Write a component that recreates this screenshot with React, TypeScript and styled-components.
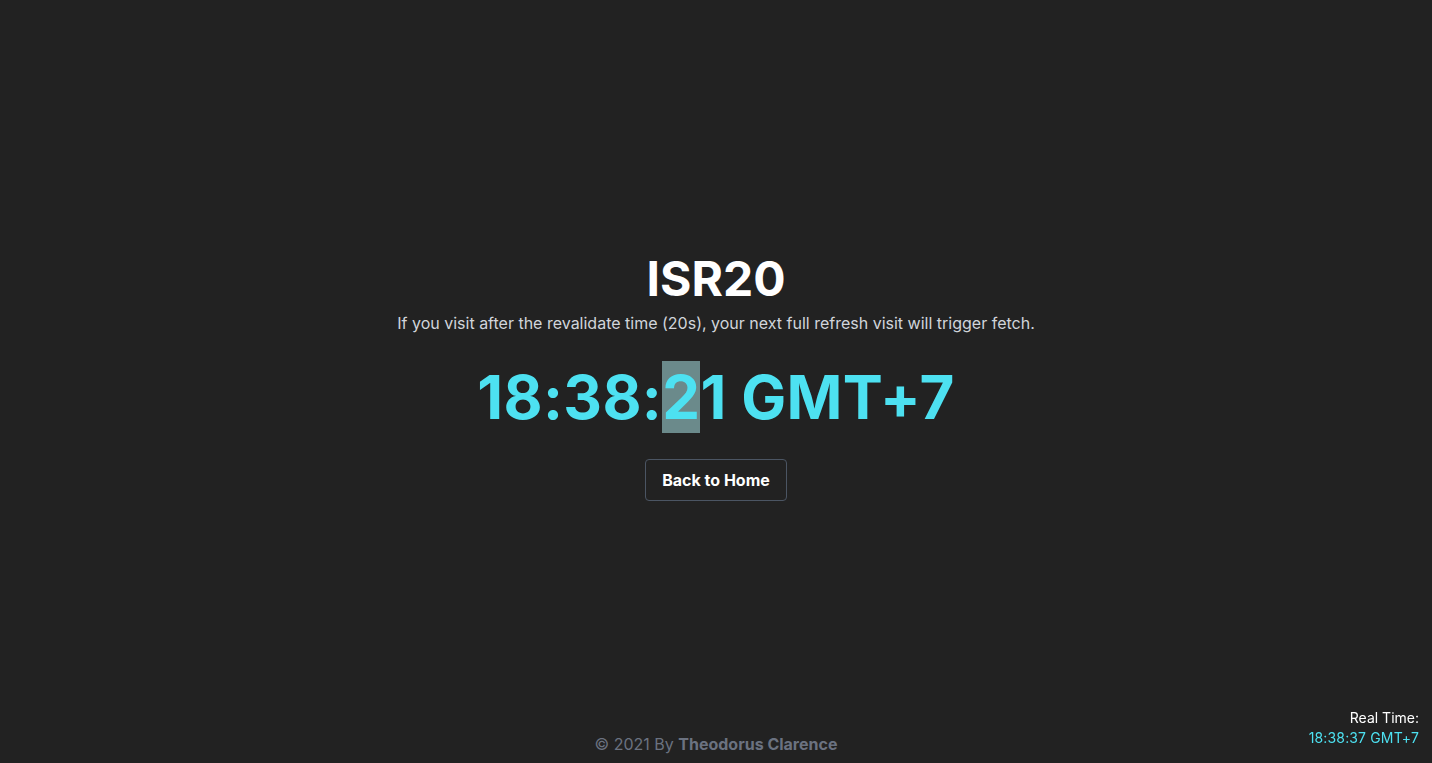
import React from 'react';
import styled, { createGlobalStyle } from 'styled-components';

const GlobalStyle = createGlobalStyle`
  * { box-sizing: border-box; }
  html, body {
    margin: 0;
    padding: 0;
    background: #222222;
    font-family: Inter, "Noto Sans", "Liberation Sans", sans-serif;
    color: #ffffff;
  }
`;

const Page = styled.div`
  position: relative;
  min-height: 763px;
  padding-bottom: 8px;
  display: flex;
  flex-direction: column;
  align-items: center;
  justify-content: center;
  text-align: center;
`;

const Title = styled.h1`
  margin: 0;
  font-size: 48px;
  line-height: 1;
  font-weight: 700;
  color: #ffffff;
`;

const Subtitle = styled.p`
  margin: 8px 0 0;
  font-size: 16px;
  line-height: 24px;
  color: #d1d5db;
`;

const Clock = styled.h2`
  margin: 32px 0 0;
  font-size: 60px;
  line-height: 1;
  font-weight: 700;
  letter-spacing: 0.35px;
  color: #4de1f1;
`;

const Selected = styled.span`
  background: #6b8a8b;
`;

const HomeButton = styled.a`
  margin-top: 32px;
  display: inline-block;
  padding: 8px 16px;
  font-size: 16px;
  line-height: 24px;
  font-weight: 700;
  color: #ffffff;
  border: 1px solid #4b5563;
  border-radius: 4px;
  text-decoration: none;
  cursor: pointer;
`;

const Footer = styled.footer`
  position: absolute;
  bottom: 7px;
  left: 0;
  right: 0;
  text-align: center;
  font-size: 16px;
  line-height: 24px;
  color: #6b7280;
`;

const Author = styled.span`
  font-weight: 700;
`;

const RealTime = styled.div`
  position: fixed;
  right: 13px;
  bottom: 15px;
  text-align: right;
  font-size: 14px;
  line-height: 20px;
`;

const RealLabel = styled.p`
  margin: 0;
  color: #ffffff;
`;

const RealValue = styled.p`
  margin: 0;
  letter-spacing: 0.15px;
  color: #4de1f1;
`;

export default function App() {
  return (
    <>
      <GlobalStyle />
      <Page>
        <Title>ISR20</Title>
        <Subtitle>
          If you visit after the revalidate time (20s), your next full refresh visit will trigger fetch.
        </Subtitle>
        <Clock>
          18:38:<Selected>2</Selected>1 GMT+7
        </Clock>
        <HomeButton>Back to Home</HomeButton>
        <Footer>
          © 2021 By <Author>Theodorus Clarence</Author>
        </Footer>
      </Page>
      <RealTime>
        <RealLabel>Real Time:</RealLabel>
        <RealValue>18:38:37 GMT+7</RealValue>
      </RealTime>
    </>
  );
}
